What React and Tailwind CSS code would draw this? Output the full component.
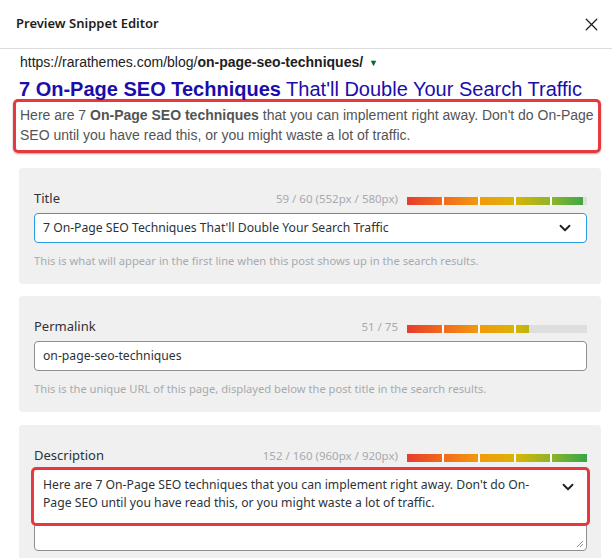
import { ChevronDown, X } from 'lucide-react'

const ui = { fontFamily: '"Noto Sans", "Open Sans", sans-serif' }
const arial = { fontFamily: '"Liberation Sans", Arial, sans-serif' }

const barGradient =
  'bg-[linear-gradient(90deg,#e53e2b_0%,#f26a1b_20%,#f39a0d_40%,#dab405_60%,#8fb428_80%,#35a64a_100%)]'

function ScoreBar({ percent }) {
  return (
    <div className="relative mb-[3px] h-[8px] w-[180px] overflow-hidden bg-[#dedede]">
      <div className="absolute inset-y-0 left-0 overflow-hidden" style={{ width: `${percent}%` }}>
        <div className={`relative h-full w-[180px] ${barGradient}`}>
          {[36, 72, 108, 144].map((p) => (
            <div key={p} className="absolute inset-y-0 w-[2px] bg-white" style={{ left: `${p - 1}px` }} />
          ))}
        </div>
      </div>
    </div>
  )
}

function FieldHead({ label, counter, percent }) {
  return (
    <div className="flex items-end justify-between">
      <div className="text-[13px] leading-[20px] text-[#2c3338]">{label}</div>
      <div className="flex items-end gap-[9px]">
        <span className="text-[11.5px] leading-[18px] text-[#a7aaad]">{counter}</span>
        <ScoreBar percent={percent} />
      </div>
    </div>
  )
}

function Panel({ className = '', children }) {
  return (
    <div className={`ml-[19px] w-[582px] rounded-[4px] bg-[#f0f0f1] pl-[15px] pr-[14px] pt-[20px] pb-[15px] ${className}`}>
      {children}
    </div>
  )
}

function Helper({ children }) {
  return <div className="mt-[10px] text-[11.2px] leading-[16px] text-[#a7aaad]">{children}</div>
}

export default function App() {
  return (
    <div className="relative h-[558px] w-[612px] overflow-hidden bg-white" style={ui}>
      <div className="flex h-[49px] items-center justify-between border-b border-[#dcdcde] pl-4 pr-[10px]">
        <div className="text-[13px] font-semibold text-[#1e1e1e]">Preview Snippet Editor</div>
        <X className="h-[21px] w-[21px] text-[#1e1e1e]" strokeWidth={1.4} />
      </div>

      <div style={arial}>
        <div className="mt-[3px] pl-[20px] text-[14px] leading-[20px] text-[#202124]">
          https://rarathemes.com/blog/<b>on-page-seo-techniques/</b>
          <span className="ml-[6px] inline-block align-middle text-[9px] text-[#006621]">▼</span>
        </div>
        <div className="mt-[4px] pl-[19px] text-[20px] leading-[24px] text-[#1a0dab]">
          <b>7 On-Page SEO Techniques</b> That'll Double Your Search Traffic
        </div>
        <p className="-mt-[2px] ml-[13px] w-[588px] rounded-[5px] border-[3px] border-[#e5393f] pl-[4px] pt-[3px] pb-[5px] text-[14px] leading-[20px] text-[#545454] shadow-[0_1px_2px_rgba(0,0,0,0.35)]">
          Here are 7 <b>On-Page SEO techniques</b> that you can implement right away. Don't do On-Page SEO until you have read this, or you might waste a lot of traffic.
        </p>
      </div>

      <Panel className="mt-[15px]">
        <FieldHead label="Title" counter="59 / 60 (552px / 580px)" percent={98} />
        <div className="mt-[5px] flex h-[30px] items-center justify-between rounded-[4px] border border-[#2a9be0] bg-white pl-[8px] pr-[12px] text-[12.2px] text-[#2c3338]">
          <span>7 On-Page SEO Techniques That'll Double Your Search Traffic</span>
          <ChevronDown className="h-[18px] w-[18px] text-[#1e1e1e]" strokeWidth={2.4} />
        </div>
        <Helper>This is what will appear in the first line when this post shows up in the search results.</Helper>
      </Panel>

      <Panel className="mt-[12px]">
        <FieldHead label="Permalink" counter="51 / 75" percent={68} />
        <div className="mt-[5px] flex h-[30px] items-center rounded-[4px] border border-[#8c8f94] bg-white pl-[8px] text-[12.2px] text-[#2c3338]">
          on-page-seo-techniques
        </div>
        <Helper>This is the unique URL of this page, displayed below the post title in the search results.</Helper>
      </Panel>

      <Panel className="mt-[13px] pt-[19px]">
        <FieldHead label="Description" counter="152 / 160 (960px / 920px)" percent={100} />
        <div className="relative mt-[6px] h-[80px] rounded-[4px] border border-[#8c8f94] bg-white">
          <div className="absolute -left-[4px] -right-[4px] -top-[5px] flex h-[59px] justify-between rounded-[5px] border-[3px] border-[#e5393f] bg-white pl-[9px] pr-[10px] pt-[6px]">
            <div className="w-[500px] text-[12.2px] leading-[18px] text-[#2c3338]">
              Here are 7 On-Page SEO techniques that you can implement right away. Don't do On-Page SEO until you have read this, or you might waste a lot of traffic.
            </div>
            <ChevronDown className="mt-[2px] h-[18px] w-[18px] text-[#1e1e1e]" strokeWidth={2.4} />
          </div>
          <svg className="absolute bottom-[2px] right-[2px]" width="8" height="8" viewBox="0 0 8 8">
            <path d="M7 1L1 7M7 4L4 7" stroke="#8c8f94" strokeWidth="1" />
          </svg>
        </div>
      </Panel>
    </div>
  )
}
